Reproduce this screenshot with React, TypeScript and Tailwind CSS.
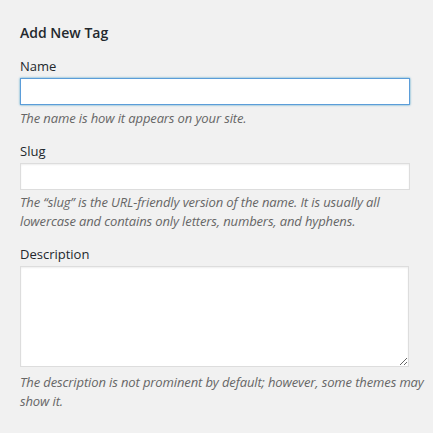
export default function App() {
  const font = { fontFamily: '"Open Sans", "Noto Sans", sans-serif' };
  return (
    <div className="min-h-[433px] w-[433px] bg-[#f1f1f1] text-[#444] pl-[20px] pt-[23px]" style={font}>
      <div className="w-[410px]">
        <h2 className="text-[14px] leading-[20px] font-semibold text-[#23282d]">Add New Tag</h2>
        <label className="block mt-[14px] text-[13px] leading-[19px] text-[#23282d]">Name</label>
        <input className="block mt-[2px] w-[390px] h-[27px] bg-white border border-[#5b9dd9] shadow-[0_0_2px_rgba(30,140,190,0.8)] outline-none" />
        <p className="mt-[4px] text-[13px] leading-[19px] italic text-[#666] tracking-[-0.12px]">The name is how it appears on your site.</p>
        <label className="block mt-[14px] text-[13px] leading-[19px] text-[#23282d]">Slug</label>
        <input className="block mt-[2px] w-[390px] h-[27px] bg-white border border-[#ddd] shadow-[inset_0_1px_2px_rgba(0,0,0,0.07)] outline-none" />
        <p className="mt-[3px] text-[13px] leading-[19px] italic text-[#666] tracking-[-0.12px]">
          <span className="block whitespace-nowrap">The “slug” is the URL-friendly version of the name. It is usually all</span>
          <span className="block whitespace-nowrap">lowercase and contains only letters, numbers, and hyphens.</span>
        </p>
        <label className="block mt-[14px] text-[13px] leading-[19px] text-[#23282d]">Description</label>
        <textarea className="block mt-[2px] w-[389px] h-[101px] bg-white border border-[#ddd] shadow-[inset_0_1px_2px_rgba(0,0,0,0.07)] outline-none" />
        <p className="mt-[6px] text-[13px] leading-[19px] italic text-[#666] tracking-[-0.12px]">
          <span className="block whitespace-nowrap">The description is not prominent by default; however, some themes may</span>
          <span className="block whitespace-nowrap">show it.</span>
        </p>
      </div>
    </div>
  );
}
